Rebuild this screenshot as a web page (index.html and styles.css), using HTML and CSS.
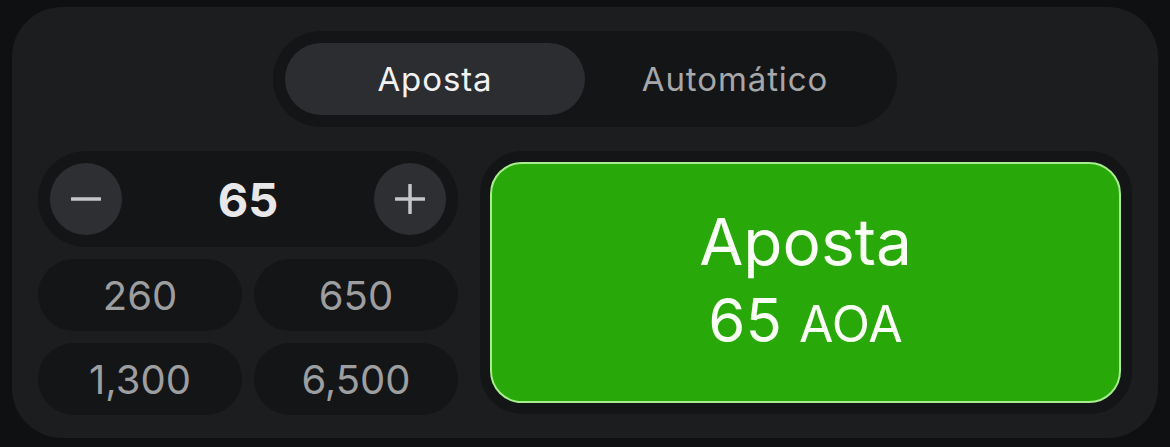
FILE: index.html
```html
<!DOCTYPE html>
<html lang="pt">
<head>
    <meta charset="UTF-8">
    <meta name="viewport" content="width=device-width, initial-scale=1.0">
    <title>Aposta</title>
    <link rel="stylesheet" href="styles.css">
</head>
<body>

    <div class="panel">
        <div class="tabs">
            <button class="tab active">Aposta</button>
            <button class="tab">Automático</button>
        </div>

        <div class="main">
            <div class="amounts">
                <div class="stepper">
                    <button class="round-btn" aria-label="Diminuir">
                        <svg width="30" height="30" viewBox="0 0 30 30"><path d="M1 15h28" stroke="#c6c6c8" stroke-width="3.5" stroke-linecap="round"/></svg>
                    </button>
                    <span class="value">65</span>
                    <button class="round-btn" aria-label="Aumentar">
                        <svg width="30" height="30" viewBox="0 0 30 30"><path d="M1 15h28M15 1v28" stroke="#c6c6c8" stroke-width="3.5" stroke-linecap="round"/></svg>
                    </button>
                </div>
                <div class="chips">
                    <button class="chip">260</button>
                    <button class="chip">650</button>
                    <button class="chip">1,300</button>
                    <button class="chip">6,500</button>
                </div>
            </div>

            <div class="bet-wrap">
                <button class="bet-btn">
                    <span class="bet-title">Aposta</span>
                    <span class="bet-amount">65 <small>AOA</small></span>
                </button>
            </div>
        </div>
    </div>

</body>
</html>
```

FILE: styles.css
```css
body {
    margin: 0;
    background-color: #0f1011;
    font-family: Inter, "Noto Sans", sans-serif;
}
button {
    font-family: inherit;
    border: none;
    padding: 0;
    cursor: pointer;
}
.panel {
    margin: 7px 12px;
    height: 431px;
    box-sizing: border-box;
    padding: 24px 26px 23px;
    background-color: #1c1d1f;
    border-radius: 50px;
}
.tabs {
    width: 624px;
    margin: 0 auto;
    box-sizing: border-box;
    padding: 12px;
    display: flex;
    background-color: #141517;
    border-radius: 48px;
}
.tab {
    width: 300px;
    height: 72px;
    border-radius: 36px;
    background: transparent;
    color: #a6a7a9;
    font-size: 33px;
    letter-spacing: 0.9px;
}
.tab.active {
    background-color: #2c2d30;
    color: #f2f2f2;
}
.main {
    display: flex;
    gap: 22px;
    margin-top: 24px;
}
.amounts {
    width: 420px;
    display: flex;
    flex-direction: column;
    gap: 12px;
}
.stepper {
    height: 96px;
    box-sizing: border-box;
    padding: 12px;
    display: flex;
    align-items: center;
    justify-content: space-between;
    background-color: #141517;
    border-radius: 48px;
}
.round-btn {
    width: 72px;
    height: 72px;
    border-radius: 50%;
    background-color: #2e2f32;
    display: flex;
    align-items: center;
    justify-content: center;
}
.value {
    color: #e8e8ea;
    font-size: 47px;
    font-weight: 700;
}
.chips {
    display: grid;
    grid-template-columns: 1fr 1fr;
    gap: 12px;
}
.chip {
    height: 72px;
    border-radius: 36px;
    background-color: #141517;
    color: #9d9ea0;
    font-size: 40px;
}
.bet-wrap {
    flex: 1;
    height: 263px;
    box-sizing: border-box;
    padding: 11px 11px 11px 10px;
    background-color: #131516;
    border-radius: 42px;
}
.bet-btn {
    width: 100%;
    height: 100%;
    box-sizing: border-box;
    padding-bottom: 6px;
    border: 2px solid #a8ee8e;
    border-radius: 32px;
    background-color: #28a909;
    color: #fafff5;
    display: flex;
    flex-direction: column;
    align-items: center;
    justify-content: center;
}
.bet-title {
    font-size: 64px;
    line-height: 78px;
    margin-bottom: 6px;
}
.bet-amount {
    font-size: 60px;
    line-height: 66px;
}
.bet-amount small {
    font-size: 50px;
}
```
